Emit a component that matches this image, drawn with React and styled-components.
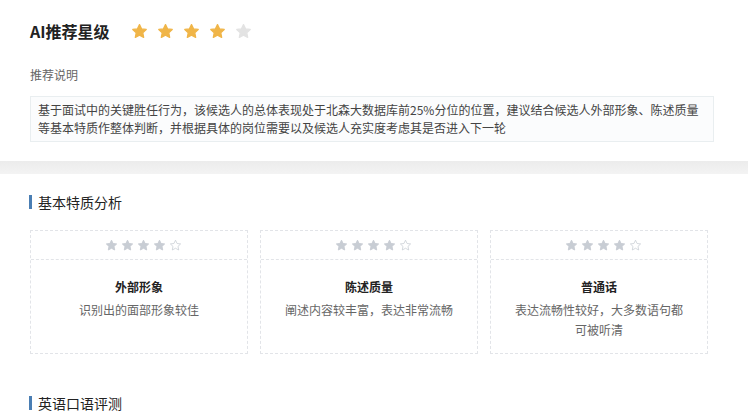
import React from "react";
import styled, { createGlobalStyle } from "styled-components";

const Global = createGlobalStyle`
  html, body { margin: 0; padding: 0; background: #fff; }
  body { font-family: "Microsoft YaHei", "Noto Sans CJK SC", "Noto Sans", sans-serif; color: #333; }
`;

const Page = styled.div`
  width: 748px;
  display: flex;
  flex-direction: column;
`;

const TopSection = styled.section`
  padding: 18px 34px 19px 30px;
  display: flex;
  flex-direction: column;
`;

const TitleRow = styled.div`
  display: flex;
  align-items: center;
  height: 26px;
  gap: 21px;
`;

const Title = styled.h1`
  margin: 0;
  font-size: 16px;
  font-weight: 700;
  color: #222;
  line-height: 26px;
`;

const StarRow = styled.div`
  display: flex;
  align-items: center;
  gap: ${(p) => p.$gap}px;
  padding-left: ${(p) => p.$shift || 0}px;
`;

const Label = styled.div`
  margin-top: 22px;
  font-size: 12px;
  line-height: 18px;
  color: #666;
`;

const Note = styled.div`
  margin-top: 12px;
  padding: 4px 7px;
  border: 1px solid #e9eef0;
  background: #fbfcfd;
  font-size: 12px;
  line-height: 18px;
  color: #444;
`;

const Band = styled.div`
  height: 13px;
  background: linear-gradient(#ececec, #f3f3f3);
`;

const Section = styled.section`
  padding: 18px 30px 0;
  display: flex;
  flex-direction: column;
`;

const Heading = styled.h2`
  margin: 0 0 0 -1px;
  display: flex;
  align-items: center;
  gap: 6px;
  font-size: 14px;
  font-weight: 400;
  line-height: 20px;
  color: #222;
  &::before {
    content: "";
    width: 3px;
    height: 14px;
    background: #4a7eb3;
  }
`;

const Cards = styled.div`
  margin-top: 18px;
  display: grid;
  grid-template-columns: repeat(3, 218px);
  gap: 12px;
  margin-bottom: 39px;
`;

const Card = styled.div`
  height: 124px;
  box-sizing: border-box;
  border: 1px dashed #e2e4e8;
  display: flex;
  flex-direction: column;
`;

const CardStars = styled.div`
  height: 28px;
  display: flex;
  justify-content: center;
  align-items: center;
  border-bottom: 1px dashed #e2e4e8;
`;

const CardBody = styled.div`
  padding: 17px 20px 0;
  text-align: center;
`;

const CardTitle = styled.div`
  font-size: 12px;
  font-weight: 700;
  line-height: 20px;
  color: #222;
  margin-bottom: 3px;
`;

const CardDesc = styled.div`
  font-size: 12px;
  line-height: 20px;
  color: #666;
`;

const STAR = "M12 2.2l2.9 6.1 6.6.8-4.9 4.6 1.3 6.6L12 17.1l-5.9 3.2 1.3-6.6-4.9-4.6 6.6-.8z";

const Star = ({ size, fill, outline }) => (
  <svg width={size} height={size} viewBox="0 0 24 24">
    <path
      d={STAR}
      fill={outline ? "none" : fill}
      stroke={fill}
      strokeWidth={outline ? 1.4 : 1.8}
      strokeLinejoin="round"
    />
  </svg>
);

const cards = [
  { title: "外部形象", desc: "识别出的面部形象较佳" },
  { title: "陈述质量", desc: "阐述内容较丰富，表达非常流畅" },
  { title: "普通话", desc: "表达流畅性较好，大多数语句都可被听清" },
];

export default function App() {
  return (
    <Page>
      <Global />
      <TopSection>
        <TitleRow>
          <Title>AI推荐星级</Title>
          <StarRow $gap={9}>
            {[0, 1, 2, 3, 4].map((i) => (
              <Star key={i} size={17} fill={i < 4 ? "#f0b548" : "#e3e3e3"} />
            ))}
          </StarRow>
        </TitleRow>
        <Label>推荐说明</Label>
        <Note>
          基于面试中的关键胜任行为，该候选人的总体表现处于北森大数据库前25%分位的位置，建议结合候选人外部形象、陈述质量等基本特质作整体判断，并根据具体的岗位需要以及候选人充实度考虑其是否进入下一轮
        </Note>
      </TopSection>
      <Band />
      <Section>
        <Heading>基本特质分析</Heading>
        <Cards>
          {cards.map((c) => (
            <Card key={c.title}>
              <CardStars>
                <StarRow $gap={3} $shift={8}>
                  {[0, 1, 2, 3, 4].map((i) => (
                    <Star key={i} size={13} fill="#c8cdd4" outline={i === 4} />
                  ))}
                </StarRow>
              </CardStars>
              <CardBody>
                <CardTitle>{c.title}</CardTitle>
                <CardDesc>{c.desc}</CardDesc>
              </CardBody>
            </Card>
          ))}
        </Cards>
        <Heading>英语口语评测</Heading>
      </Section>
    </Page>
  );
}
